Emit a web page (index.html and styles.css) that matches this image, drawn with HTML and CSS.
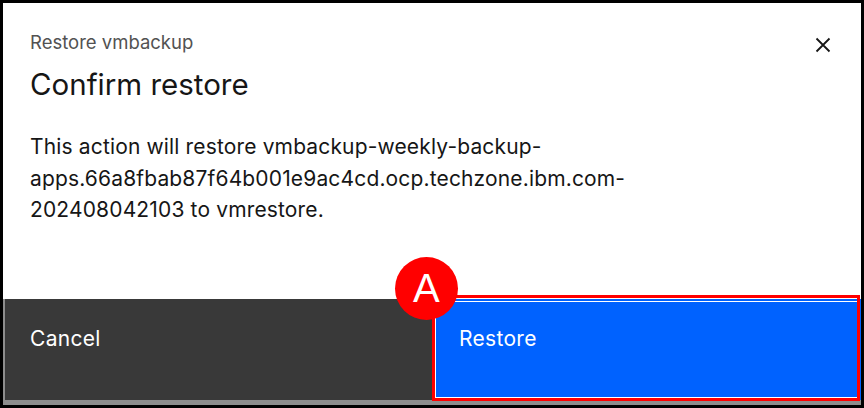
FILE: index.html
```html
<!DOCTYPE html>
<html lang="en">
<head>
<meta charset="utf-8">
<title>Confirm restore</title>
<link rel="stylesheet" href="styles.css">
</head>
<body>
<div class="frame">
  <div class="modal">
    <div class="modal-main">
      <div class="modal-header">
        <div class="titles">
          <p class="label">Restore vmbackup</p>
          <h2 class="heading">Confirm restore</h2>
        </div>
        <button class="close" aria-label="Close">
          <svg width="20" height="20" viewBox="0 0 20 20" aria-hidden="true">
            <path d="M3.5 3.5 L16.5 16.5 M16.5 3.5 L3.5 16.5" stroke="#161616" stroke-width="1.8" fill="none"/>
          </svg>
        </button>
      </div>
      <p class="body-text">This action will restore vmbackup-weekly-backup-<br>apps.66a8fbab87f64b001e9ac4cd.ocp.techzone.ibm.com-<br>202408042103 to vmrestore.</p>
    </div>
    <div class="footer">
      <button class="btn btn-secondary">Cancel</button>
      <button class="btn btn-primary">Restore
        <span class="annot-box"></span>
        <span class="annot-badge">A</span>
      </button>
    </div>
  </div>
</div>
</body>
</html>
```

FILE: styles.css
```css
* { box-sizing: border-box; }
html, body { margin: 0; padding: 0; }
body {
  background: #000;
  width: 864px;
  height: 408px;
  overflow: hidden;
  font-family: Inter, "Noto Sans", sans-serif;
}
.frame {
  padding: 3px 3px 3px 3px;
  height: 408px;
}
.modal {
  background: #fff;
  height: 402px;
  display: flex;
  flex-direction: column;
  border-bottom: 5px solid #8d8d8d;
}
.modal-main {
  flex: 1;
  padding: 0 0 0 27px;
}
.modal-header {
  display: flex;
  justify-content: space-between;
  align-items: flex-start;
}
.titles { padding-top: 27px; }
.label {
  margin: 0;
  font-size: 18.5px;
  line-height: 24px;
  color: #525252;
}
.heading {
  margin: 12px 0 0;
  font-size: 29.5px;
  font-weight: 400;
  line-height: 36px;
  color: #161616;
}
.close {
  margin: 32px 28px 0 0;
  width: 20px;
  height: 20px;
  padding: 0;
  border: 0;
  background: transparent;
  display: flex;
}
.body-text {
  margin: 29px 0 0;
  font-size: 21px;
  letter-spacing: 0.15px;
  line-height: 31.5px;
  color: #161616;
}
.footer {
  display: flex;
  height: 101px;
}
.btn {
  border: 0;
  margin: 0;
  font-family: inherit;
  font-size: 21px;
  letter-spacing: 0.3px;
  line-height: 24px;
  color: #fff;
  text-align: left;
  display: flex;
  align-items: flex-start;
  padding-top: 28px;
}
.btn-secondary {
  width: 430px;
  background: #393939;
  padding-left: 25px;
  border-left: 2px solid #8d8d8d;
}
.btn-primary {
  flex: 1;
  position: relative;
  background: #0062ff;
  padding-left: 26px;
  box-shadow: inset 0 0 0 2px #0062ff, inset 0 0 0 3px #fff;
}
.annot-box {
  position: absolute;
  left: -1px;
  top: -4px;
  right: 1px;
  bottom: -1px;
  border: 3px solid #ff0000;
}
.annot-badge {
  position: absolute;
  left: -38px;
  top: -42px;
  width: 63px;
  height: 63px;
  border-radius: 50%;
  background: #ff0000;
  color: #fff;
  font-family: "Liberation Sans", Arial, sans-serif;
  font-size: 40px;
  line-height: 63px;
  text-align: center;
}
```
